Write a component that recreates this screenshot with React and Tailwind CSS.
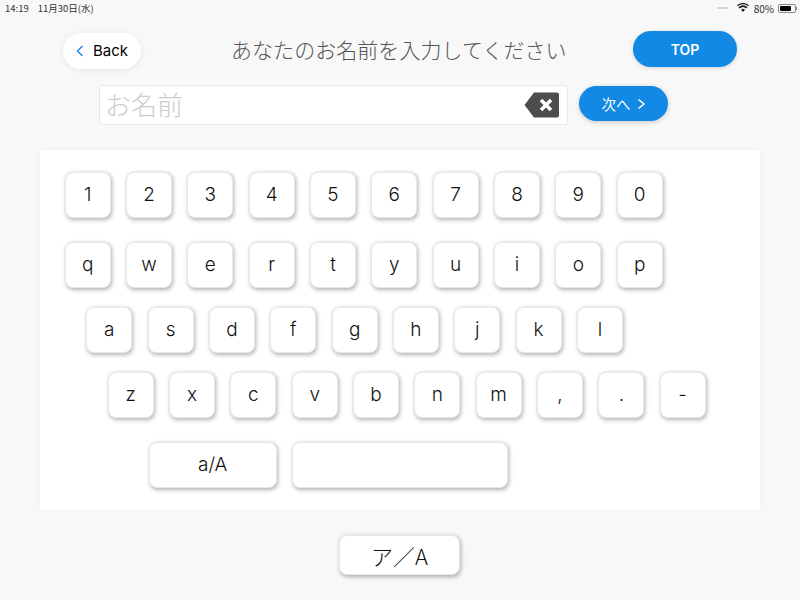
const JP = { fontFamily: '"Noto Sans CJK JP", Inter, sans-serif' };

function Key({ label, className = "w-[46px]" }) {
  return (
    <div className={`${className} h-[46px] shrink-0 flex items-center justify-center bg-white rounded-[8px] border border-[#e8e8e8] shadow-[1px_1.5px_4px_rgba(0,0,0,0.3)] text-[19px] font-light text-[#111111]`}>
      {label}
    </div>
  );
}

function Row({ keys, className }) {
  return (
    <div className={`flex gap-[15.33px] ${className}`}>
      {keys.map((k) => (
        <Key key={k} label={k} />
      ))}
    </div>
  );
}

export default function App() {
  return (
    <div className="w-[800px] h-[600px] overflow-hidden bg-[#f8f8f8] flex flex-col" style={JP}>
      {/* status bar */}
      <div className="h-[16px] flex items-center justify-between pl-[5px] pr-[3px] text-[9.5px] text-[#333333]">
        <div className="flex gap-[9px]">
          <span>14:19</span>
          <span>11月30日(水)</span>
        </div>
        <div className="flex items-center gap-[4px]">
          <svg width="14" height="4" viewBox="0 0 14 4" className="mr-[1px]">
            <g fill="#b5b5b5">
              <circle cx="1.5" cy="2" r="1" />
              <circle cx="4.5" cy="2" r="1" />
              <circle cx="7.5" cy="2" r="1" />
              <circle cx="10.5" cy="2" r="1" />
            </g>
          </svg>
          <svg width="12" height="9" viewBox="0 0 24 18" className="mx-[1px] -mt-[1px]">
            <path d="M12 18 L8 13.5 A6 6 0 0 1 16 13.5 Z M5.5 11 L3 8.3 A13 13 0 0 1 21 8.3 L18.5 11 A9.5 9.5 0 0 0 5.5 11 Z M1.5 6.5 L0 4.5 A18 18 0 0 1 24 4.5 L22.5 6.5 A16 16 0 0 0 1.5 6.5 Z" fill="#222222" />
          </svg>
          <span className="text-[10px]">80%</span>
          <div className="flex items-center">
            <div className="w-[18px] h-[9px] rounded-[2px] border border-[#888888] p-[1px]">
              <div className="w-[80%] h-full bg-black rounded-[1px]" />
            </div>
            <div className="w-[1px] h-[3px] bg-[#888888]" />
          </div>
        </div>
      </div>

      {/* header */}
      <div className="h-[36px] mt-[15px] pl-[63px] pr-[63px] flex items-start">
        <div className="mt-[2px] w-[78px] h-[36px] rounded-full bg-white shadow-[0_1px_6px_rgba(0,0,0,0.08)] flex items-center justify-center gap-[9px] text-[15px] font-normal text-black" style={{ fontFamily: "Inter, sans-serif" }}>
          <svg width="8" height="12" viewBox="0 0 8 12" fill="none" stroke="#1a88e4" strokeWidth="1.4">
            <path d="M6.5 1 L1.5 6 L6.5 11" />
          </svg>
          <span>Back</span>
        </div>
        <div className="w-[337px] ml-[90px] mt-[3px] text-[21px] leading-[30px] tracking-[0.05px] font-light text-[#555555] whitespace-nowrap">
          あなたのお名前を入力してください
        </div>
        <div className="ml-auto w-[104px] h-[36px] rounded-full bg-[#1289e4] shadow-[0_1px_4px_rgba(0,0,0,0.15)] flex items-center justify-center text-white text-[14px] font-semibold" style={{ fontFamily: "Inter, sans-serif" }}>
          TOP
        </div>
      </div>

      {/* input row */}
      <div className="mt-[18px] pl-[99px] flex items-start">
        <div className="w-[469px] h-[40px] bg-white border border-[#e8e8e8] rounded-[3px] flex items-center justify-between pl-[6px] pr-[7px]">
          <span className="text-[26px] leading-[36px] -mt-[2px] -ml-[1px] font-light text-[#cccccc]">お名前</span>
          <svg width="36" height="26" viewBox="0 0 36 26">
            <path d="M10 0.5 H33 A2 2 0 0 1 35 2.5 V23.5 A2 2 0 0 1 33 25.5 H10 L0.5 13 Z" fill="#4d4d4d" />
            <path d="M17 8 L27 18 M27 8 L17 18" stroke="#ffffff" strokeWidth="3.6" />
          </svg>
        </div>
        <div className="ml-[11px] mt-[1px] w-[89px] h-[35px] rounded-full bg-[#1289e4] shadow-[0_1px_5px_rgba(0,0,0,0.2)] flex items-center justify-center gap-[6px] text-white text-[14.5px]">
          <span>次へ</span>
          <svg width="9" height="12" viewBox="0 0 9 12" fill="none" stroke="#ffffff" strokeWidth="1.5">
            <path d="M1.5 1.5 L7 6 L1.5 10.5" />
          </svg>
        </div>
      </div>

      {/* keyboard panel */}
      <div className="mt-[25px] mx-[40px] h-[360px] bg-white rounded-t-[4px] shadow-[0_-1px_6px_rgba(0,0,0,0.04)] pt-[22px]" style={{ fontFamily: "Inter, sans-serif" }}>
        <Row className="pl-[24.7px]" keys={["1", "2", "3", "4", "5", "6", "7", "8", "9", "0"]} />
        <Row className="pl-[24.7px] mt-[24px]" keys={["q", "w", "e", "r", "t", "y", "u", "i", "o", "p"]} />
        <Row className="pl-[46.3px] mt-[19px]" keys={["a", "s", "d", "f", "g", "h", "j", "k", "l"]} />
        <Row className="pl-[67.7px] mt-[19px]" keys={["z", "x", "c", "v", "b", "n", "m", ",", ".", "-"]} />
        <div className="flex gap-[15px] pl-[108.7px] mt-[24px]">
          <Key label="a/A" className="w-[128px]" />
          <Key label="" className="w-[216px]" />
        </div>
      </div>

      {/* bottom switch */}
      <div className="mt-[25px] pl-[339px]">
        <div className="w-[121px] h-[40px] bg-white rounded-[8px] border border-[#e8e8e8] shadow-[1px_1.5px_4px_rgba(0,0,0,0.3)] flex items-center justify-center text-[22px] font-light text-[#111111]">
          ア／A
        </div>
      </div>
    </div>
  );
}
